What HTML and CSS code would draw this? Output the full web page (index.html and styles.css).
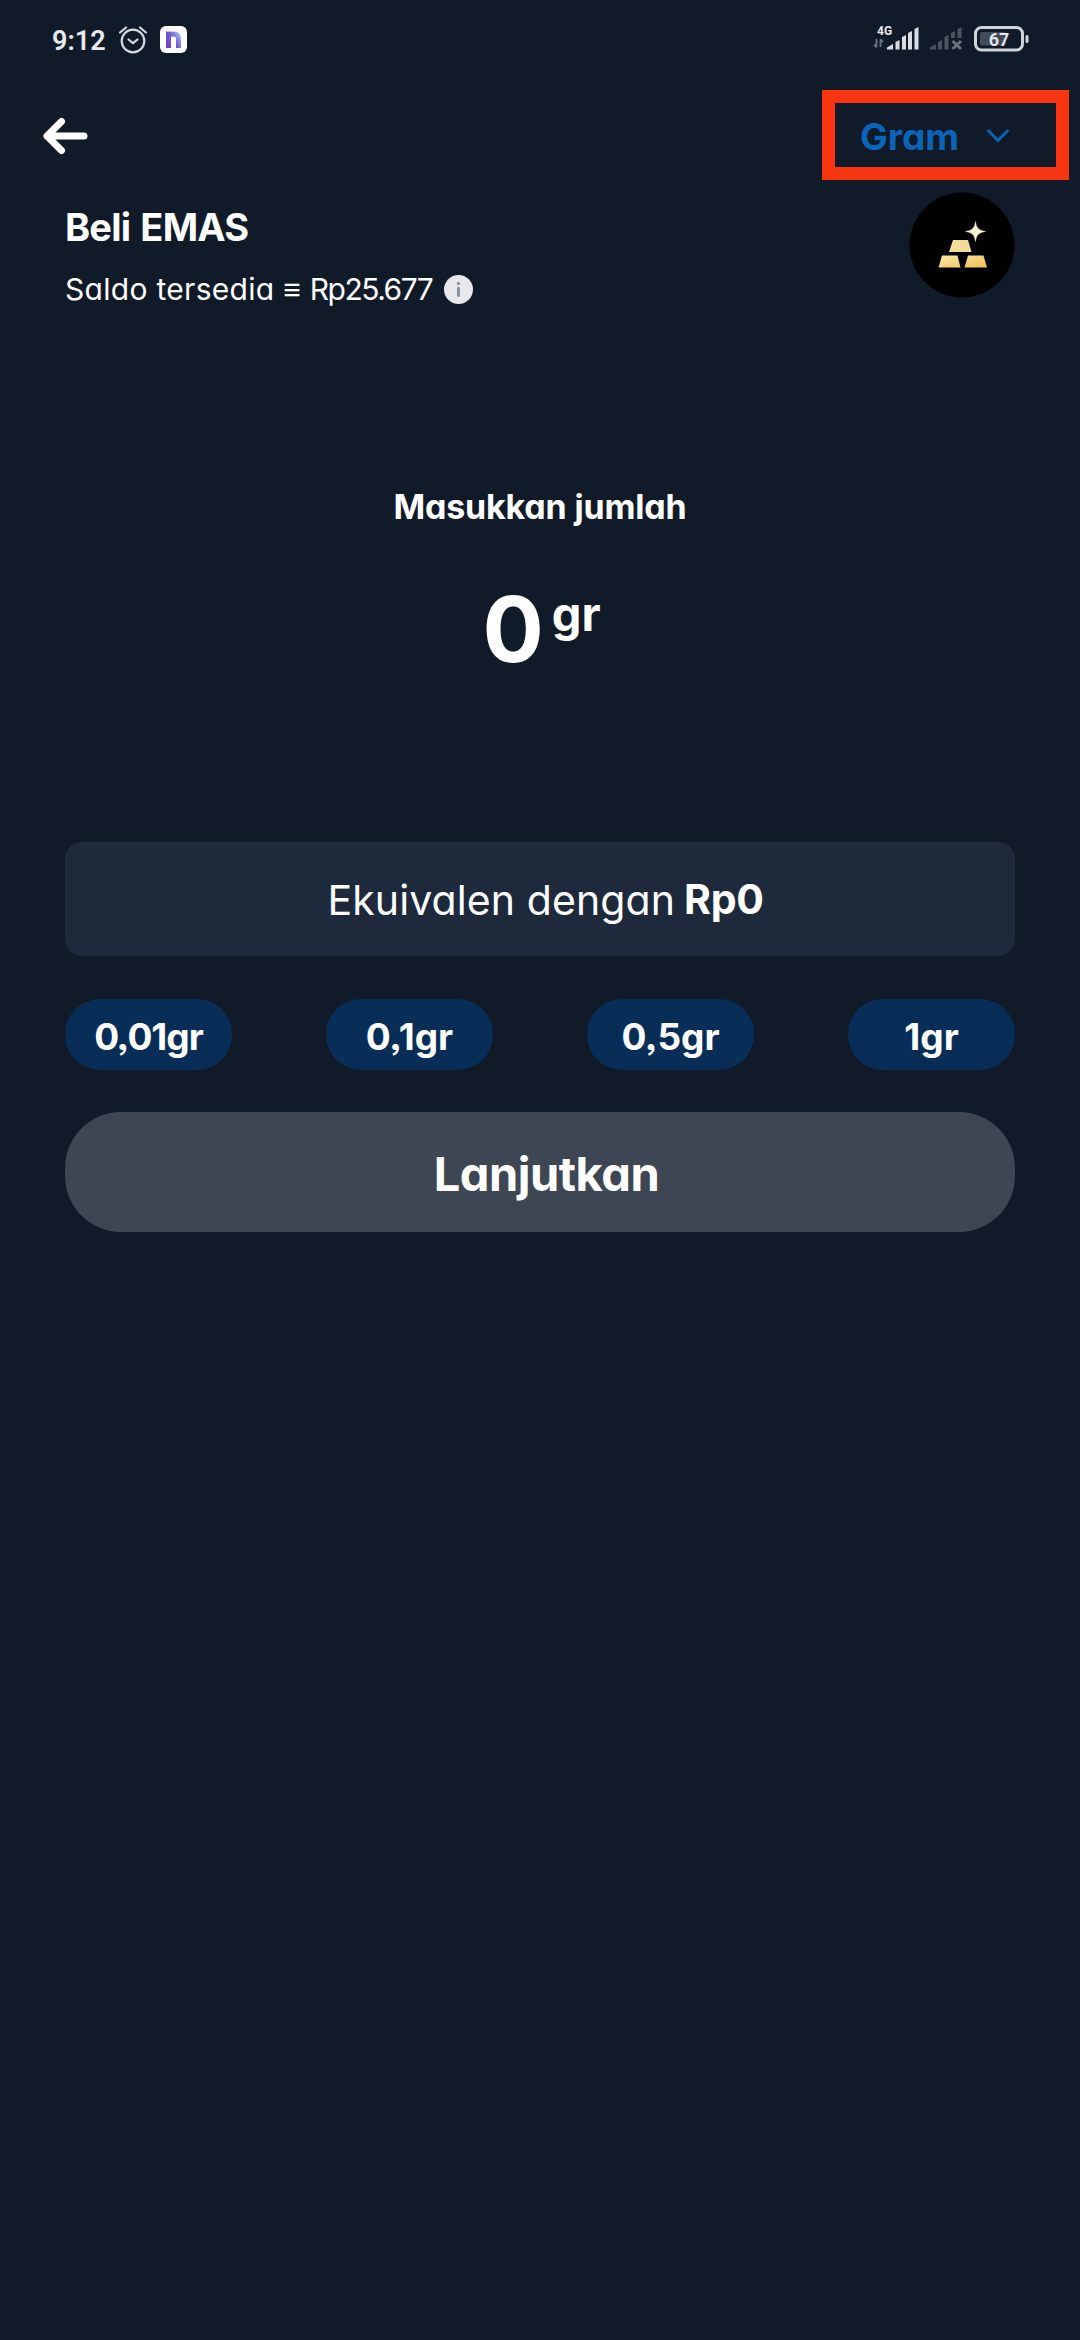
FILE: index.html
```html
<!DOCTYPE html>
<html lang="id">
<head>
<meta charset="utf-8">
<title>Beli EMAS</title>
<link rel="stylesheet" href="styles.css">
</head>
<body>
<div class="status">
  <div class="status-side">
    <span class="clock">9:12</span>
    <svg class="alarm" width="30" height="30" viewBox="0 0 30 30" fill="none" stroke="#d5d9df" stroke-width="2.2" stroke-linecap="round" stroke-linejoin="round"><circle cx="15" cy="16" r="11.3"/><path d="M2 7.5 8 2.500M28 7.500 22 2.500M10.500 14.500 15 18.200 19.500 14.500"/></svg>
    <svg class="app" width="27" height="27" viewBox="0 0 27 27"><defs><linearGradient id="n" x1="0" y1="1" x2="1" y2="0"><stop offset="0" stop-color="#7a3fc0"/><stop offset=".5" stop-color="#6f5fd0"/><stop offset="1" stop-color="#a9b8f5"/></linearGradient></defs><rect width="27" height="27" rx="6" fill="#fff"/><path d="M8.500 22V5.500M8.500 9.500Q9 8 13.500 8Q18.500 8 18.500 12.500V22" fill="none" stroke="url(#n)" stroke-width="5"/></svg>
  </div>
  <div class="status-side">
    <svg width="48" height="28" viewBox="0 0 48 28"><text class="net" x="4" y="11.500">4G</text><path d="M3.500 16V24M1 21.500 3.500 24.500M7.500 24V16.500M10 19 7.500 16" stroke="#6c7480" stroke-width="1.800" fill="none"/><path class="bars" d="M14 26.500v-2l6-3.500v5.500zM22.500 26.500V19l4-2v9.500zM29 26.500V14l4-2v14.500zM35 26.500V10l4-2v18.500zM41.500 26.500V6l4-2v22.500z"/></svg>
    <svg class="sim" width="34" height="28" viewBox="0 0 34 28" fill="#4b535f"><path d="M1 26.500v-2l6-3.500v5.500zM9 26.500V19l4-2v9.500zM15.500 26.500V14l4-2v14.500zM22 15V10l4-2v7zM28.500 15V6l4-2v11z"/><path d="M23.500 18 32 26M32 18 23.500 26" stroke="#6a717c" stroke-width="3"/></svg>
    <svg class="battery" width="55" height="26" viewBox="0 0 55 26"><rect x="1.500" y="1.500" width="47" height="22.500" rx="6" fill="none" stroke="#cfd4da" stroke-width="3"/><rect x="6" y="6" width="26" height="13.500" rx="2" fill="#434b58"/><rect x="51.500" y="9" width="3" height="8" rx="1.500" fill="#cfd4da"/><text class="pct" x="25" y="19.500" text-anchor="middle">67</text></svg>
  </div>
</div>
<header class="bar">
  <svg class="back" width="46" height="38" viewBox="0 0 46 38" fill="none" stroke="#fff" stroke-width="7" stroke-linecap="round" stroke-linejoin="round"><path d="M42 19H5M19.500 4.500 5 19 19.500 33.500"/></svg>
  <div class="unit"><span class="gram">Gram</span><svg width="22" height="14" viewBox="0 0 22 14" fill="none" stroke="#0a64b8" stroke-width="2.900" stroke-linecap="round" stroke-linejoin="round"><path d="M1.500 1.800 11 11.600 20.500 1.800"/></svg></div>
</header>
<main class="page">
  <section class="head">
    <div>
      <h1 class="title">Beli EMAS</h1>
      <div class="saldo"><span>Saldo tersedia ≡ <span class="money">Rp25.677</span></span><svg width="29" height="29" viewBox="0 0 29 29"><circle cx="14.500" cy="14.500" r="14.500" fill="#e6e8ec"/><circle cx="14.500" cy="8.500" r="1.700" fill="#8a94a3"/><path d="M14.500 13.300V20.500" stroke="#8a94a3" stroke-width="3" stroke-linecap="round"/></svg></div>
    </div>
    <svg class="gold" width="106" height="106" viewBox="0 0 106 106"><defs><linearGradient id="g" x1="0" y1="0" x2="1" y2="1"><stop offset="0" stop-color="#fbe9a8"/><stop offset="1" stop-color="#efbf55"/></linearGradient></defs><circle cx="53" cy="53" r="52.500"/><path d="M44 48h15l3.500 12H40z" fill="#f3dc98"/><path d="M33 63.500h15.500L51.500 75.500H29.500zM59 63.500h15.500L78 75.500H55.500z" fill="url(#g)"/><path d="M66.500 29.500Q67.200 38.800 76.500 39.500 67.200 40.200 66.500 49.500 65.800 40.200 56.500 39.500 65.800 38.800 66.500 29.500z" fill="#f8f6cf" stroke="#f8f6cf" stroke-width=".4"/></svg>
  </section>
  <p class="label">Masukkan jumlah</p>
  <div class="amount"><span class="zero">0</span><span class="gr">gr</span></div>
  <div class="equiv"><span>Ekuivalen dengan</span><strong>Rp0</strong></div>
  <div class="pills">
    <button class="pill pill-long">0,01gr</button>
    <button class="pill">0,1gr</button>
    <button class="pill">0,5gr</button>
    <button class="pill">1gr</button>
  </div>
  <button class="next">Lanjutkan</button>
</main>
</body>
</html>
```
FILE: styles.css
```css
* { box-sizing: border-box; }
body { margin: 0; min-height: 2340px; background: #111a28; color: #fff; font-family: Inter, "Noto Sans", sans-serif; font-feature-settings: "cv11", "ss03"; }
svg { display: block; flex: none; }
h1, p { margin: 0; }

.status { display: flex; justify-content: space-between; height: 90px; padding: 23px 51px 0 52px; }
.status-side { display: flex; align-items: flex-start; }
.clock { width: 66px; padding-top: 2px; font: 600 27px/32px Roboto, sans-serif; color: #e8eaee; }
.alarm { margin-top: 2px; }
.app { margin: 3px 0 0 12px; }
.net { font: 700 12px Roboto, sans-serif; fill: #e8eaee; }
.bars { fill: #d9dde2; }
.pct { font: 600 18px Roboto, sans-serif; fill: #e8eaee; }
.sim { margin-left: 8px; }
.battery { margin: 3px 0 0 11px; }

.bar { display: flex; align-items: center; justify-content: space-between; height: 90px; padding: 0 11px 0 42px; }
.back { margin-top: 2px; }
.unit { display: flex; align-items: center; justify-content: space-between; width: 247px; height: 90px; padding: 2px 47px 0 25px; border: 13px solid #f73511; color: #0a64b8; }
.gram { font-size: 37px; font-weight: 650; }

.page { padding: 12px 65px 0; }
.head { display: flex; justify-content: space-between; height: 106px; }
.title { padding-top: 11px; font-size: 38px; line-height: 48px; font-weight: 700; letter-spacing: -0.8px; word-spacing: 2px; }
.saldo { display: flex; align-items: center; gap: 12px; margin-top: 16px; font-size: 30px; line-height: 44px; letter-spacing: 0.3px; }
.money { letter-spacing: -1.5px; }

.label { margin-top: 184px; text-align: center; font-size: 34px; line-height: 50px; font-weight: 650; letter-spacing: -0.2px; }
.amount { display: flex; justify-content: center; align-items: flex-start; gap: 9px; margin-top: 46px; height: 100px; padding-left: 3px; line-height: 102px; }
.zero { font-size: 91px; font-weight: 650; letter-spacing: -1px; }
.gr { font-size: 47px; line-height: 71px; font-weight: 650; }

.equiv { display: flex; justify-content: center; gap: 9px; margin-top: 164px; height: 114px; padding-left: 11px; border-radius: 17px; background: #1e2a3c; font-size: 41px; line-height: 116px; letter-spacing: 0.1px; }
.equiv strong { line-height: 114px; letter-spacing: -0.3px; }
.pills { display: flex; justify-content: space-between; margin-top: 43px; }
.pill, .next { border: 0; color: #fff; font-family: inherit; font-feature-settings: inherit; }
.pill { width: 167px; height: 71px; padding: 4px 0 0; border-radius: 35px; background: #082e57; font-size: 37px; font-weight: 650; }
.pill-long { letter-spacing: -1px; }
.next { width: 950px; height: 120px; margin-top: 42px; padding: 2px 0 0 13px; border-radius: 56px; background: #3e4654; font-size: 47px; font-weight: 650; letter-spacing: -0.5px; }
```
